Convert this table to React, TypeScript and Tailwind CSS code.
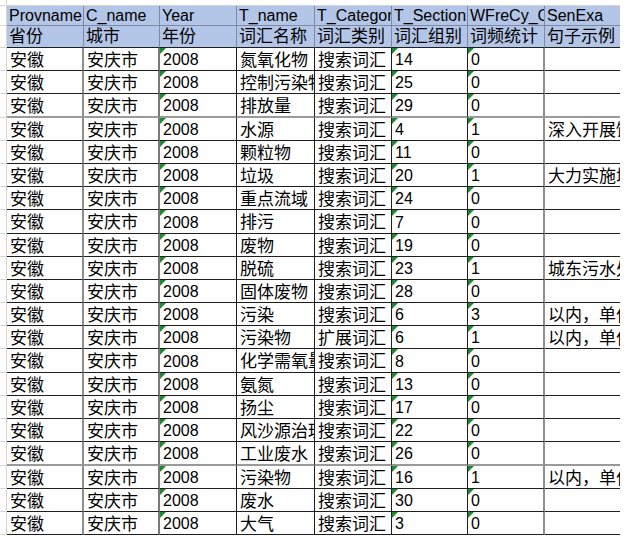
import React from 'react';

const font = { fontFamily: '"Liberation Sans", "Noto Sans CJK SC", sans-serif' };

const widths = [
  'w-[77px]',
  'w-[76px]',
  'w-[77px]',
  'w-[78px]',
  'w-[77px]',
  'w-[76px]',
  'w-[77px]',
  'w-[75px]',
];

// right border per column: a few are the thicker grey ones
const rightBorders = [
  'border-r-2 border-r-[#8f8f8f]',
  'border-r-2 border-r-[#7a7a7a]',
  'border-r border-r-[#1f1f1f]',
  'border-r border-r-[#1f1f1f]',
  'border-r border-r-[#1f1f1f]',
  'border-r border-r-[#1f1f1f]',
  'border-r-2 border-r-[#8f8f8f]',
  'border-r-0',
];

const headEn = ['Provname', 'C_name', 'Year', 'T_name', 'T_Category', 'T_Section', 'WFreCy_Count', 'SenExa'];
const headZh = ['省份', '城市', '年份', '词汇名称', '词汇类别', '词汇组别', '词频统计', '句子示例'];

type Row = { name: string; cat: string; sec: string; freq: string; sen: string };

const rows: Row[] = [
  { name: '氮氧化物', cat: '搜索词汇', sec: '14', freq: '0', sen: '' },
  { name: '控制污染物', cat: '搜索词汇', sec: '25', freq: '0', sen: '' },
  { name: '排放量', cat: '搜索词汇', sec: '29', freq: '0', sen: '' },
  { name: '水源', cat: '搜索词汇', sec: '4', freq: '1', sen: '深入开展饮用水源地保护' },
  { name: '颗粒物', cat: '搜索词汇', sec: '11', freq: '0', sen: '' },
  { name: '垃圾', cat: '搜索词汇', sec: '20', freq: '1', sen: '大力实施城乡垃圾治理' },
  { name: '重点流域', cat: '搜索词汇', sec: '24', freq: '0', sen: '' },
  { name: '排污', cat: '搜索词汇', sec: '7', freq: '0', sen: '' },
  { name: '废物', cat: '搜索词汇', sec: '19', freq: '0', sen: '' },
  { name: '脱硫', cat: '搜索词汇', sec: '23', freq: '1', sen: '城东污水处理厂建成' },
  { name: '固体废物', cat: '搜索词汇', sec: '28', freq: '0', sen: '' },
  { name: '污染', cat: '搜索词汇', sec: '6', freq: '3', sen: '以内，单位生产总值' },
  { name: '污染物', cat: '扩展词汇', sec: '6', freq: '1', sen: '以内，单位生产总值' },
  { name: '化学需氧量', cat: '搜索词汇', sec: '8', freq: '0', sen: '' },
  { name: '氨氮', cat: '搜索词汇', sec: '13', freq: '0', sen: '' },
  { name: '扬尘', cat: '搜索词汇', sec: '17', freq: '0', sen: '' },
  { name: '风沙源治理', cat: '搜索词汇', sec: '22', freq: '0', sen: '' },
  { name: '工业废水', cat: '搜索词汇', sec: '26', freq: '0', sen: '' },
  { name: '污染物', cat: '搜索词汇', sec: '16', freq: '1', sen: '以内，单位生产总值' },
  { name: '废水', cat: '搜索词汇', sec: '30', freq: '0', sen: '' },
  { name: '大气', cat: '搜索词汇', sec: '3', freq: '0', sen: '' },
];

function Flag() {
  return (
    <span className="absolute left-0 top-0 h-0 w-0 border-t-[6px] border-r-[6px] border-t-[#1d8a2e] border-r-transparent" />
  );
}

function Gutter() {
  return <div className="w-[7px] shrink-0 border-r border-b border-[#d6d6d6]" />;
}

function HeadCell({ text, i, last, zh }: { text: string; i: number; last: boolean; zh: boolean }) {
  return (
    <div
      className={`${widths[i]} flex items-center overflow-hidden whitespace-nowrap bg-[#b4c6e7] pl-[2px] leading-none ${
        zh ? 'border-b border-b-[#1f1f1f] text-[17px]' : 'border-b border-b-[#7d8aa3] text-[16px]'
      } ${last ? '' : 'border-r border-r-[#7d8aa3]'}`}
    >
      {text}
    </div>
  );
}

export default function App() {
  return (
    <div className="h-[538px] w-[634px] overflow-hidden bg-white text-black" style={font}>
      {/* top strip */}
      <div className="flex h-[6px]">
        <Gutter />
        <div className="w-[613px] border-b border-[#d6d6d6]" />
      </div>

      {/* header rows */}
      <div className="flex h-[20px]">
        <Gutter />
        {headEn.map((h, i) => (
          <HeadCell key={h} text={h} i={i} last={i === 7} zh={false} />
        ))}
      </div>
      <div className="flex h-[22px]">
        <Gutter />
        {headZh.map((h, i) => (
          <HeadCell key={h} text={h} i={i} last={i === 7} zh />
        ))}
      </div>

      {/* data rows */}
      {rows.map((r, idx) => {
        const tall = idx === 7 || idx === 13;
        const grey = idx === 2 || idx === 17;
        const rowH = tall || grey ? 'h-[24px]' : 'h-[23px]';
        const bottom = grey ? 'border-b-2 border-b-[#9a9a9a]' : 'border-b border-b-[#1f1f1f]';
        const cells = ['安徽', '安庆市', '2008', r.name, r.cat, r.sec, r.freq, r.sen];
        const flagged = [false, false, true, false, false, true, true, false];
        return (
          <div key={idx} className={`flex ${rowH}`}>
            <Gutter />
            {cells.map((c, i) => (
              <div
                key={i}
                className={`relative ${widths[i]} ${rightBorders[i]} ${bottom} flex items-center overflow-hidden whitespace-nowrap pl-[3px] leading-none ${/^[0-9]+$/.test(c) ? 'text-[16px]' : 'text-[17px]'}`}
              >
                {flagged[i] && <Flag />}
                <span className="pt-[2px]">{c}</span>
              </div>
            ))}
          </div>
        );
      })}
    </div>
  );
}
